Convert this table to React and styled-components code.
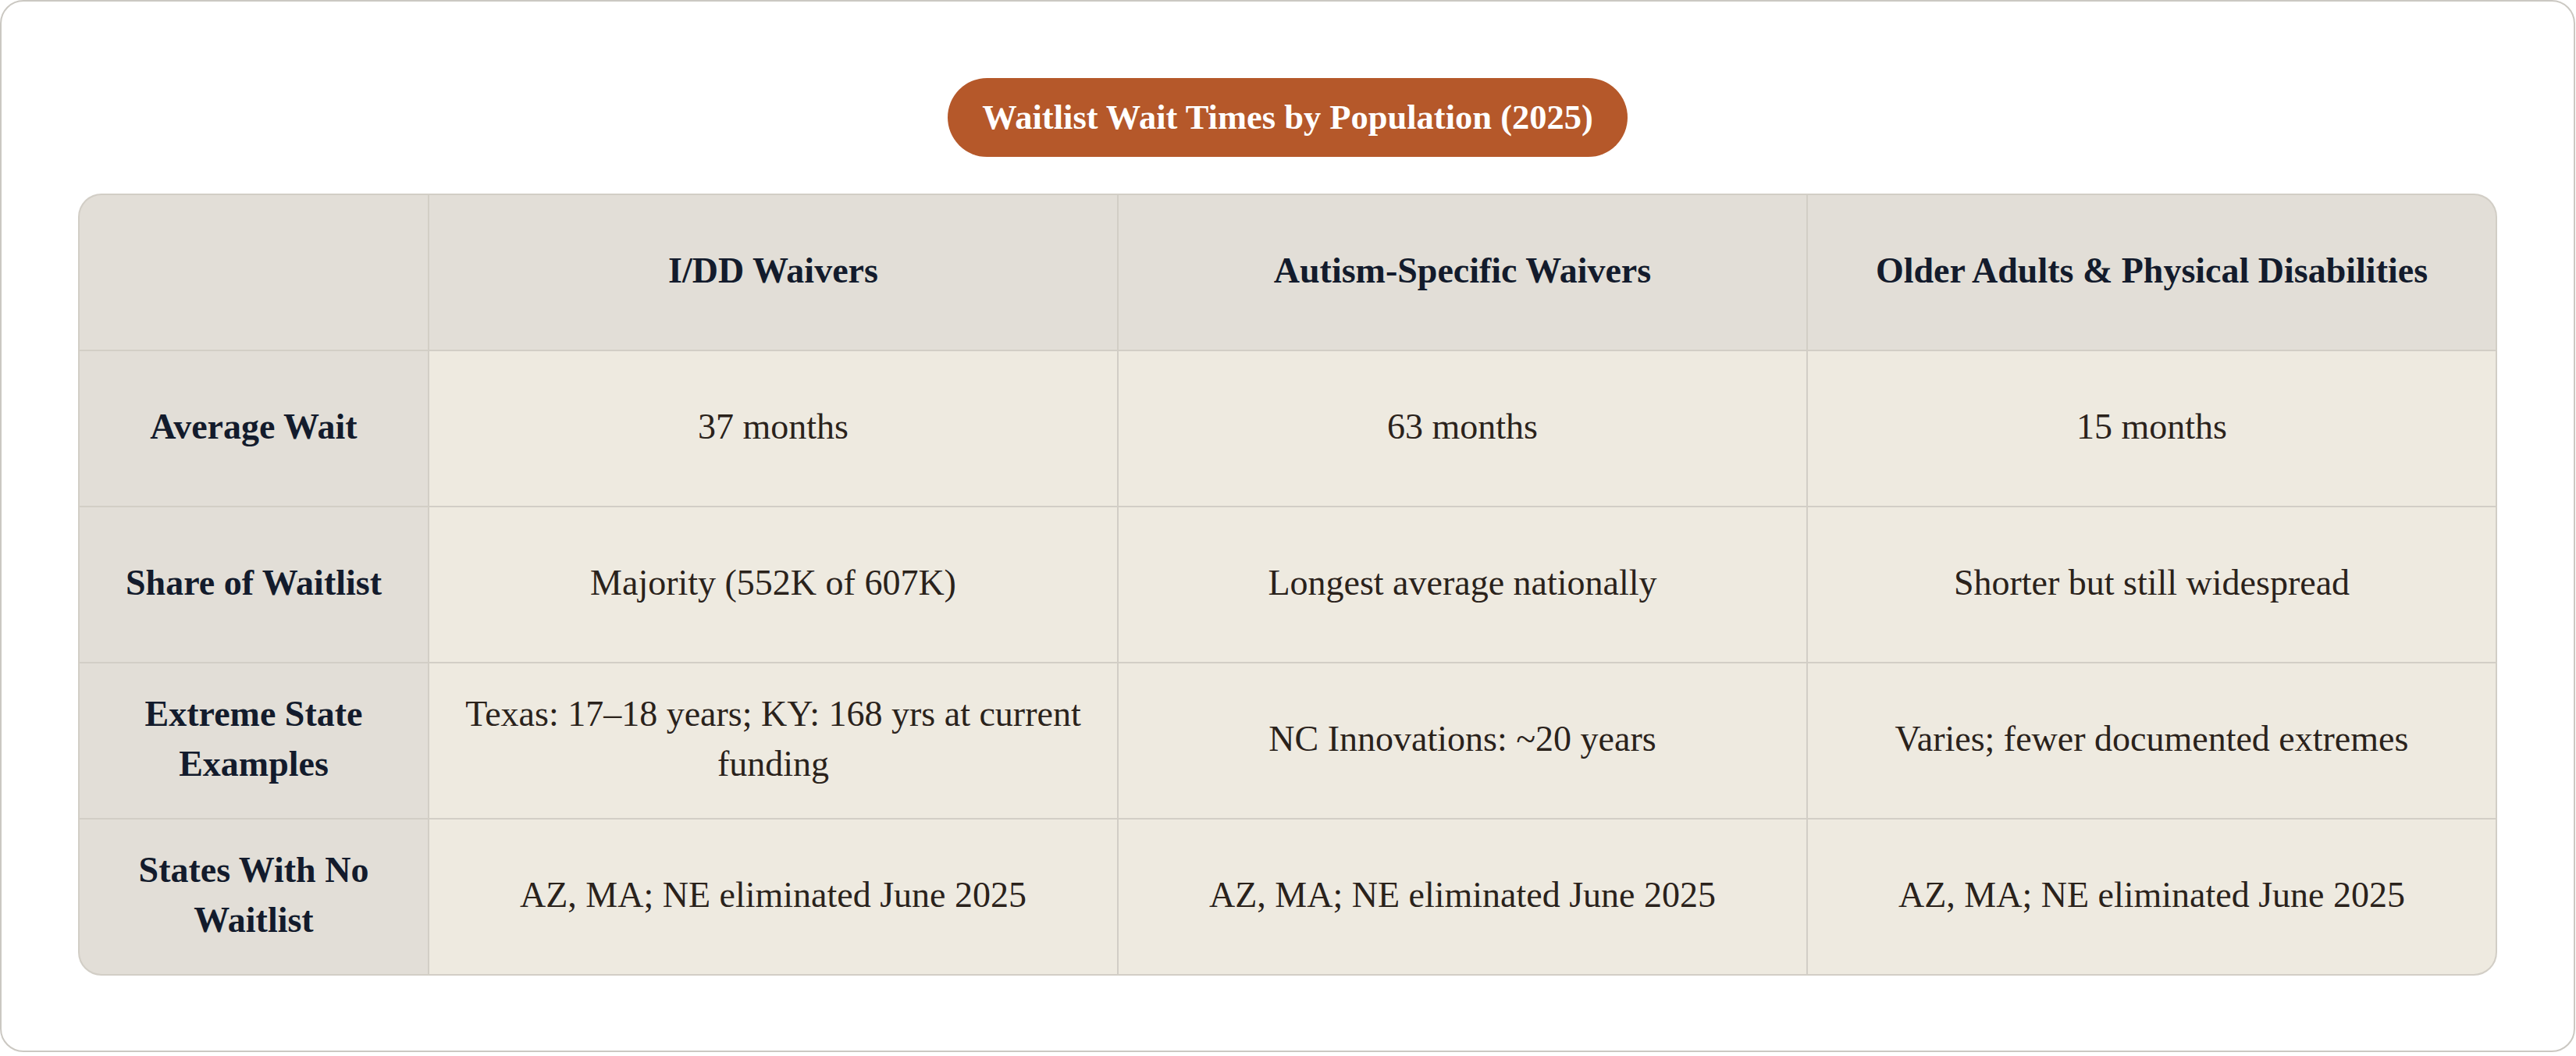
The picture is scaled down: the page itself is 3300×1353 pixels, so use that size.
import React from "react";
import styled, { createGlobalStyle } from "styled-components";

const GlobalStyle = createGlobalStyle`
  html, body {
    margin: 0;
    padding: 0;
    background: #ffffff;
  }
  body {
    font-family: "Liberation Serif", "Times New Roman", serif;
  }
  * { box-sizing: border-box; }
`;

const Card = styled.div`
  width: 3299px;
  border: 2px solid #cbc8c2;
  border-radius: 30px;
  background: #ffffff;
  padding: 98px 98px 96px 98px;
  display: flex;
  flex-direction: column;
  align-items: center;
  gap: 47px;
`;

const TitlePill = styled.h1`
  margin: 0;
  background: #b5582a;
  color: #ffffff;
  font-family: "Liberation Serif", "Times New Roman", serif;
  font-weight: 700;
  font-size: 44.5px;
  line-height: 53px;
  padding: 24px 44px;
  border-radius: 60px;
  white-space: nowrap;
`;

const Table = styled.div`
  align-self: stretch;
  display: grid;
  grid-template-columns: 446px 1fr 1fr 1fr;
  grid-auto-rows: 198px;
  gap: 2px;
  background: #d2cec6;
  border: 2px solid #d2cec6;
  border-radius: 30px;
  overflow: hidden;
`;

const Cell = styled.div`
  display: flex;
  align-items: center;
  justify-content: center;
  text-align: center;
  padding: 0 40px 5px;
  font-size: 46px;
  line-height: 64px;
  background: ${(p) =>
    p.$kind === "head" || p.$kind === "label" ? "#e2ded7" : "#eeeae0"};
  color: ${(p) => (p.$kind === "body" ? "#2a221b" : "#131b2c")};
  font-weight: ${(p) => (p.$kind === "body" ? 400 : 700)};
`;

const headers = [
  "",
  "I/DD Waivers",
  "Autism-Specific Waivers",
  "Older Adults & Physical Disabilities",
];

const rows = [
  ["Average Wait", "37 months", "63 months", "15 months"],
  [
    "Share of Waitlist",
    "Majority (552K of 607K)",
    "Longest average nationally",
    "Shorter but still widespread",
  ],
  [
    "Extreme State Examples",
    "Texas: 17–18 years; KY: 168 yrs at current funding",
    "NC Innovations: ~20 years",
    "Varies; fewer documented extremes",
  ],
  [
    "States With No Waitlist",
    "AZ, MA; NE eliminated June 2025",
    "AZ, MA; NE eliminated June 2025",
    "AZ, MA; NE eliminated June 2025",
  ],
];

export default function App() {
  return (
    <>
      <GlobalStyle />
      <Card>
        <TitlePill>Waitlist Wait Times by Population (2025)</TitlePill>
        <Table>
          {headers.map((h, i) => (
            <Cell key={"h" + i} $kind="head">
              {h}
            </Cell>
          ))}
          {rows.map((r, ri) =>
            r.map((c, ci) => (
              <Cell key={ri + "-" + ci} $kind={ci === 0 ? "label" : "body"}>
                {c}
              </Cell>
            ))
          )}
        </Table>
      </Card>
    </>
  );
}
